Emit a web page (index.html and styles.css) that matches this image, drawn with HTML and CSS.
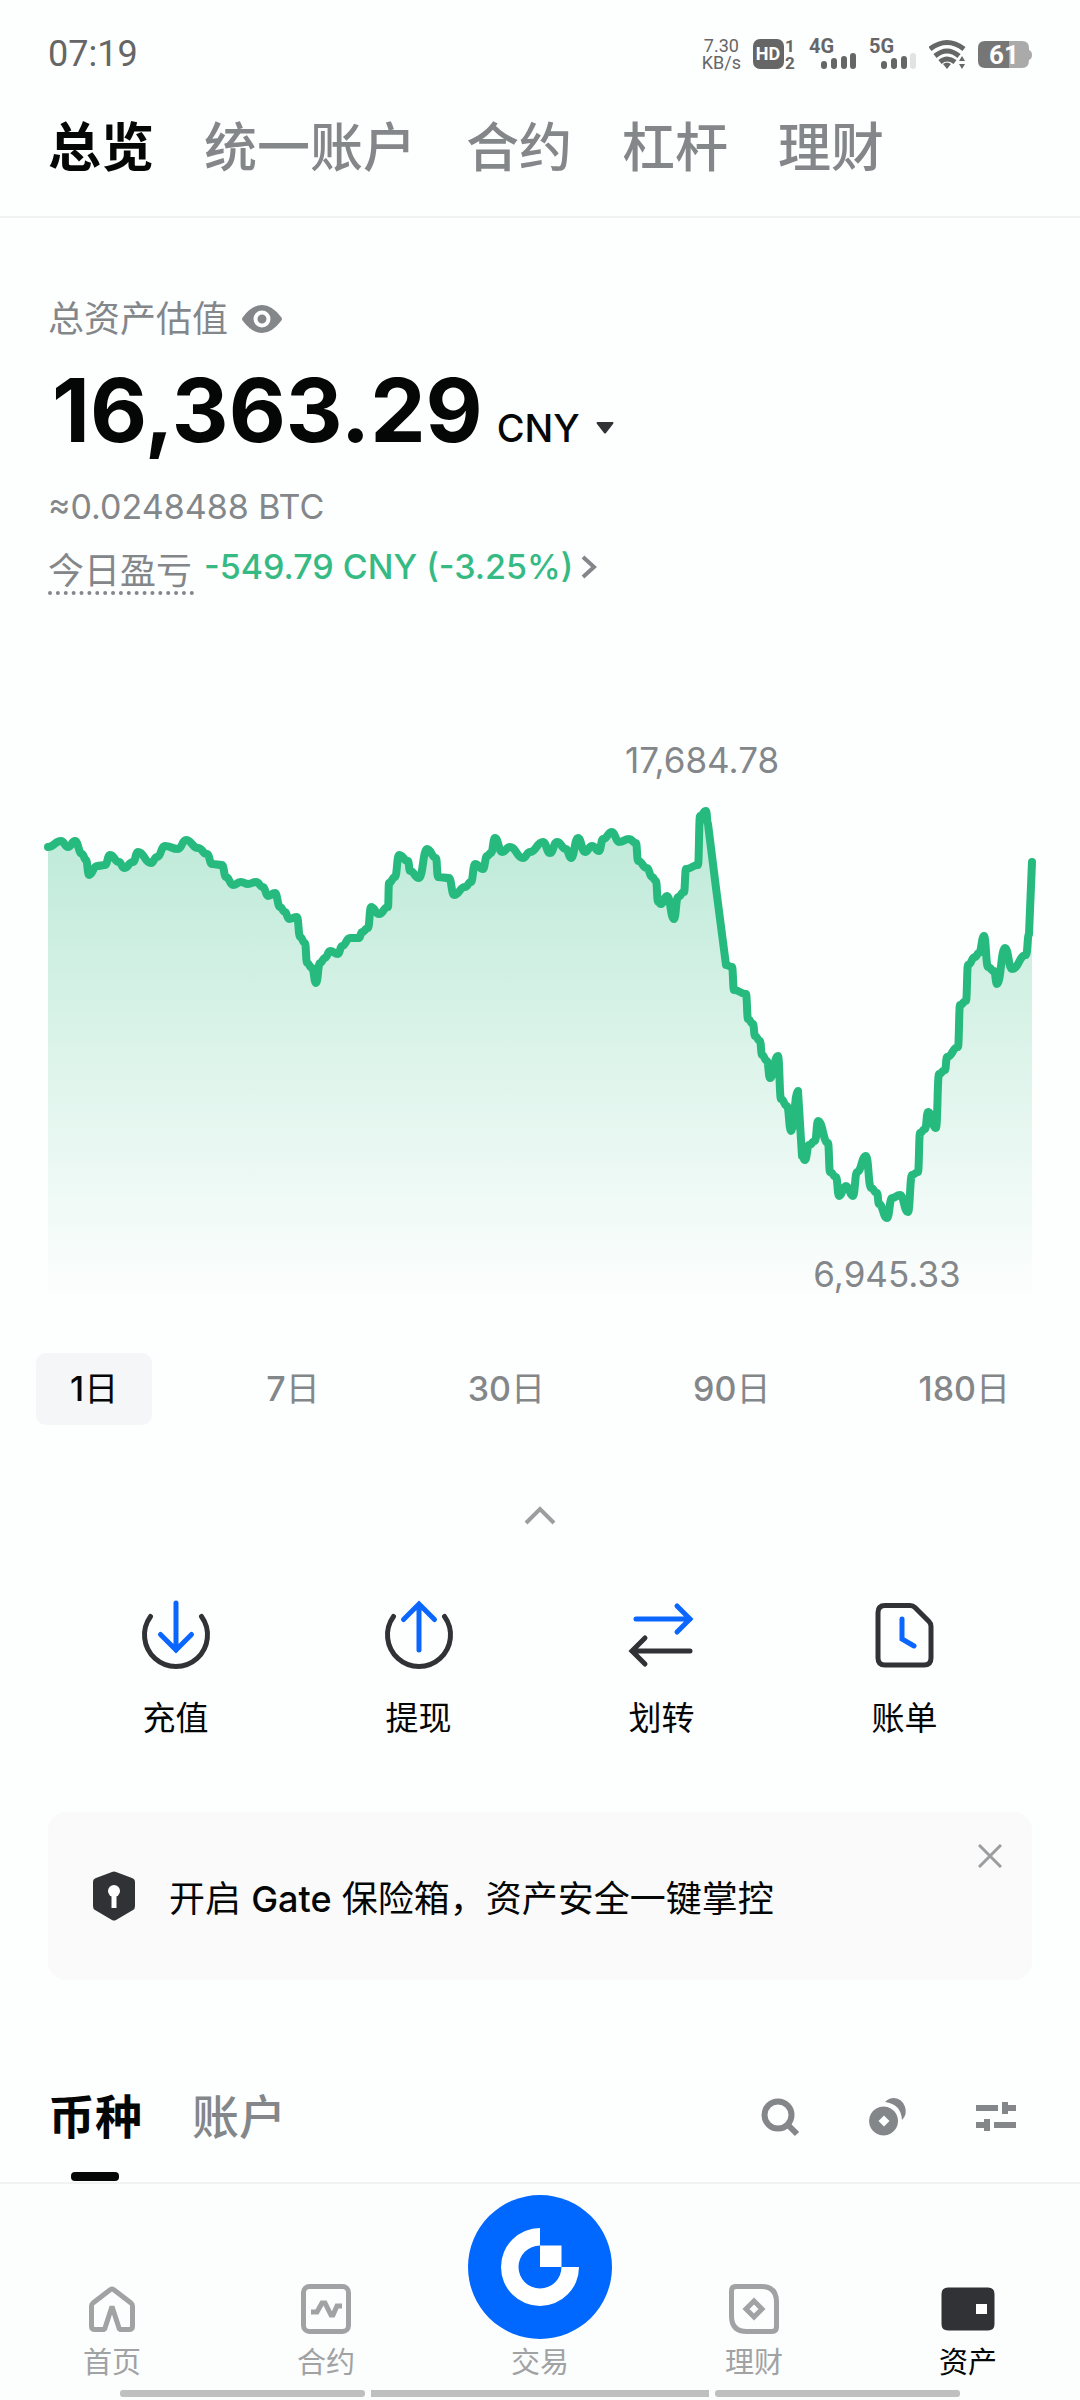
FILE: index.html
```
<!DOCTYPE html>
<html lang="zh-CN">
  <head>
    <meta charset="UTF-8" />
    <meta name="viewport" content="width=device-width, initial-scale=1.0" />
    <title>资产总览</title>
    <link rel="stylesheet" href="styles.css">
  </head>

  <body>
    <div class="status-bar">
      <span class="clock">07:19</span>
      <div class="status-icons">
        <span class="net-speed">7.30<br>KB/s</span>
        <svg width="44" height="40" viewBox="0 0 44 40">
          <rect x="0" y="5" width="31" height="30" rx="7" fill="#666"/>
          <text class="hd" x="15" y="26" text-anchor="middle">HD</text>
          <text class="sim" x="37" y="18" text-anchor="middle">1</text>
          <text class="sim" x="37" y="35" text-anchor="middle">2</text>
        </svg>
        <svg width="48" height="40" viewBox="0 0 48 40">
          <text class="gen" x="0" y="19">4G</text>
          <path class="bars" d="M15 30v2M25 27v5M35 25v7M44 22v10"/>
        </svg>
        <svg width="48" height="40" viewBox="0 0 48 40">
          <text class="gen" x="0" y="19">5G</text>
          <path class="bars" d="M15 30v2M25 27v5M35 25v7"/>
          <path class="bars off" d="M44 22v10"/>
        </svg>
        <svg width="37" height="32" viewBox="0 0 37 32" fill="none" stroke="#666" stroke-width="5">
          <path d="M1 11Q18 -2 35 11"/>
          <path d="M6 18Q18 8 30 18"/>
          <path d="M11 24Q18 18 26 24"/>
          <path d="M14 26Q18 23 22 26L18 31Z" fill="#666" stroke="none"/>
          <path d="M33 18l3 5h-6zM33 31l3-5h-6z" fill="#666" stroke="none"/>
        </svg>
        <svg width="54" height="32" viewBox="0 0 54 32">
          <path d="M31 3h13q7 0 7 7v2q3 1 3 5t-3 5q0 8-7 8H31z" fill="#aaa"/>
          <path d="M31 3v27H7q-7 0-7-7V10q0-7 7-7z" fill="#767676"/>
          <text class="battery" x="26" y="26" text-anchor="middle">61</text>
        </svg>
      </div>
    </div>

    <nav class="account-tabs">
      <a href="#" class="active">总览</a>
      <a href="#">统一账户</a>
      <a href="#">合约</a>
      <a href="#">杠杆</a>
      <a href="#">理财</a>
    </nav>

    <main>
      <section class="balance">
        <div class="balance-label">
          <span>总资产估值</span>
          <button class="plain" aria-label="隐藏金额">
            <svg width="40" height="28" viewBox="0 0 40 28">
              <path d="M1 12Q10 0 20 0T39 12Q41 14 39 16Q30 28 20 28T1 16Q-1 14 1 12Z" fill="#84878a"/>
              <circle cx="20" cy="14" r="6.500" fill="none" stroke="#fff" stroke-width="4"/>
            </svg>
          </button>
        </div>
        <div class="total">
          <span class="amount">16,363.29</span>
          <button class="plain currency">CNY
            <svg width="18" height="12" viewBox="0 0 18 12"><path d="M1 0h16q1 1 0 2L10 11q-1 1-2 0L1 2Q0 1 1 0z" fill="#303236"/></svg>
          </button>
        </div>
        <div class="btc">≈0.0248488 BTC</div>
        <div class="pnl">
          <span class="pnl-label">今日盈亏</span>
          <a href="#" class="pnl-value">-549.79 CNY (-3.25%)
            <svg width="16" height="24" viewBox="0 0 16 24"><path d="M2 2l11 10L2 22" fill="none" stroke="#84878a" stroke-width="4"/></svg>
          </a>
        </div>
      </section>

      <svg class="chart" viewBox="0 -60 984 570">
        <defs>
          <linearGradient id="fade" gradientUnits="userSpaceOnUse" x1="0" y1="20" x2="0" y2="500">
            <stop offset="0" stop-color="#27ba7e" stop-opacity="0.300"/>
            <stop offset="1" stop-color="#27ba7e" stop-opacity="0"/>
          </linearGradient>
        </defs>
        <path id="area" fill="url(#fade)"/>
        <path id="line" fill="none" stroke="#27ba7e" stroke-width="8" stroke-linecap="round" stroke-linejoin="round"/>
        <text x="654" y="-27" text-anchor="middle">17,684.78</text>
        <text x="839" y="487" text-anchor="middle">6,945.33</text>
      </svg>

      <div class="ranges">
        <button class="active"><b>1</b>日</button>
        <button><b>7</b>日</button>
        <button><b>30</b>日</button>
        <button><b>90</b>日</button>
        <button><b>180</b>日</button>
      </div>

      <button class="plain collapse" aria-label="收起">
        <svg width="34" height="22" viewBox="0 0 34 22"><path d="M3 18L17 4l14 14" fill="none" stroke="#9b9d9f" stroke-width="4"/></svg>
      </button>

      <div class="actions">
        <a href="#">
          <svg viewBox="0 0 72 72">
            <path d="M10.500 17.500a31.500 31.500 0 1 0 51 0"/>
            <path class="blue" d="M36 4v47M20.500 35.500L36 51l15.500-15.500"/>
          </svg>
          充值
        </a>
        <a href="#">
          <svg viewBox="0 0 72 72">
            <path d="M10.500 17.500a31.500 31.500 0 1 0 51 0"/>
            <path class="blue" d="M36 51V5M20.500 20.500L36 5l15.500 15.500"/>
          </svg>
          提现
        </a>
        <a href="#">
          <svg viewBox="0 0 72 72">
            <path class="blue" d="M10 20h54M51 7l13 13-13 13"/>
            <path d="M64 52H6M19 39L6 52l13 13"/>
          </svg>
          划转
        </a>
        <a href="#">
          <svg viewBox="0 0 72 72">
            <path d="M16 6.500h25q3 0 5 2l14 14q2 2 2 5V59q0 7-7 7H16q-7 0-7-7V13.500q0-7 7-7z"/>
            <path class="blue" d="M33 20v20l12 7"/>
          </svg>
          账单
        </a>
      </div>

      <div class="notice">
        <svg width="42" height="50" viewBox="0 0 42 50">
          <path d="M19 1q2-1 4 0l16 6q3 1 3 4v24q0 3-2 4L23 49q-2 1-4 0L2 39q-2-1-2-4V11q0-3 3-4z" fill="#303236"/>
          <circle cx="21" cy="20" r="6" fill="#fff"/>
          <path d="M21 20v17" stroke="#fff" stroke-width="5"/>
        </svg>
        <span>开启 <b>Gate</b> 保险箱，资产安全一键掌控</span>
        <button class="plain close" aria-label="关闭">
          <svg width="24" height="24" viewBox="0 0 24 24"><path d="M1 1l22 22M23 1L1 23" stroke="#9b9d9f" stroke-width="3"/></svg>
        </button>
      </div>

      <div class="list-head">
        <a href="#" class="active">币种</a>
        <a href="#">账户</a>
        <div class="tools">
          <button class="plain" aria-label="搜索">
            <svg width="40" height="40" viewBox="0 0 40 40" fill="none" stroke="#84878a" stroke-width="6">
              <circle cx="18" cy="18" r="13.500"/><path d="M28 28l9 9"/>
            </svg>
          </button>
          <button class="plain" aria-label="隐藏小额资产">
            <svg width="40" height="40" viewBox="0 0 40 40" fill="#84878a">
              <path d="M17 5A13 13 0 0 1 26 1A13 13 0 0 1 34 23Q33 7 17 5z"/>
              <path fill-rule="evenodd" d="M15.500 9.500a14.500 14.500 0 1 0 .1 0zM16 18.500l5.500 5.500-5.500 5.500-5.500-5.500z"/>
            </svg>
          </button>
          <button class="plain" aria-label="筛选">
            <svg width="40" height="40" viewBox="0 0 40 40" fill="#84878a">
              <path d="M0 8h22v6H0zM26 5h6v3h8v6h-8v3h-6zM18 25h22v6H18zM14 22v12H8v-3H0v-6h8v-3z"/>
            </svg>
          </button>
        </div>
      </div>
    </main>

    <nav class="bottom-nav">
      <a href="#">
        <svg viewBox="0 0 60 60"><path d="M22.500 50.500H13q-3.500 0-3.500-3.500V27q0-2 1.500-3L28.500 10.500q1.500-1 3 0L49 24q1.500 1 1.500 3v20q0 3.500-3.500 3.500h-9.500L30 27.500z" stroke-linejoin="bevel"/></svg>
        首页
      </a>
      <a href="#">
        <svg viewBox="0 0 60 60"><rect x="7.500" y="7.500" width="45" height="45" rx="6"/><path d="M15 33h6l5-9h3l6 12h2l4-9h5"/></svg>
        合约
      </a>
      <a href="#">
        <svg class="trade" viewBox="0 0 144 144">
          <circle cx="72" cy="72" r="72" fill="#0068ff"/>
          <path d="M72 33v17.500A21.500 21.500 0 1 0 93.500 72H111A39 39 0 1 1 72 33z" fill="#fff"/>
          <path d="M72 50.500h21.500V72H72z" fill="#fff"/>
        </svg>
        交易
      </a>
      <a href="#">
        <svg viewBox="0 0 60 60"><path d="M12 7.500h25q15.500 0 15.500 15.500v25q0 4.500-4.500 4.500H23Q7.500 52.500 7.500 37V12q0-4.500 4.500-4.500z"/><path d="M30 22l8 8-8 8-8-8z"/></svg>
        理财
      </a>
      <a href="#" class="active">
        <svg viewBox="0 0 60 60"><path d="M10 8.500h40q6.500 0 6.500 6.500v30q0 6.500-6.500 6.500H10q-6.500 0-6.500-6.500V15q0-6.500 6.500-6.500z" fill="#303236" stroke="none"/><path d="M38 25h11v10H38z" fill="#fff" stroke="none"/></svg>
        资产
      </a>
    </nav>
    <div class="gesture-bar"><span></span><span class="mid"></span><span></span></div>

    <script src="script.js"></script>
  </body>
</html>
```

FILE: styles.css
```
* {
  box-sizing: border-box;
}
body {
  margin: 0;
  background: #fdfefe;
  color: #050606;
  font-family: "Inter", "Noto Sans CJK SC", sans-serif;
  font-size: 36px;
}
a {
  color: inherit;
  text-decoration: none;
}
b {
  font-weight: 500;
}
svg {
  display: block;
  flex: none;
}
button {
  font: inherit;
  color: inherit;
  border: 0;
  background: none;
}
.plain {
  padding: 0;
}

/* status bar */
.status-bar {
  display: flex;
  justify-content: space-between;
  align-items: center;
  padding: 34px 48px 0;
  height: 74px;
  font-family: "Roboto", sans-serif;
  color: #666;
}
.status-icons {
  display: flex;
  align-items: center;
  gap: 12px;
}
.net-speed {
  font-size: 18px;
  line-height: 17px;
  text-align: center;
}
.status-icons text {
  font-weight: 700;
  fill: #666;
}
.status-icons .hd {
  font-size: 18px;
  fill: #fff;
}
.sim {
  font-size: 17px;
}
.gen {
  font-size: 20px;
}
.status-icons .battery {
  font-size: 26px;
  fill: #fff;
}
.bars {
  stroke: #666;
  stroke-width: 6;
  stroke-linecap: round;
}
.bars.off {
  stroke: #e2e2e2;
}

/* top tabs */
.account-tabs {
  display: flex;
  gap: 50px;
  padding: 42px 48px 36px;
  border-bottom: 2px solid #f1f2f2;
  font-size: 53px;
  line-height: 64px;
  font-weight: 500;
  color: #84878a;
}
.account-tabs .active {
  color: #050606;
  font-weight: 700;
}

main {
  padding: 79px 48px 0;
}

/* balance */
.balance-label {
  display: flex;
  align-items: center;
  gap: 14px;
  line-height: 44px;
  color: #84878a;
}
.total {
  display: flex;
  align-items: baseline;
  gap: 14px;
  margin-top: 19px;
  padding-left: 4px;
  line-height: 100px;
}
.amount {
  font-size: 88px;
  font-weight: 700;
}
.currency {
  display: flex;
  align-items: center;
  gap: 16px;
  font-size: 38px;
  font-weight: 500;
  line-height: 48px;
}
.btc {
  margin-top: 27px;
  font-size: 34px;
  line-height: 40px;
  color: #84878a;
}
.pnl {
  display: flex;
  align-items: flex-end;
  gap: 10px;
  height: 50px;
  margin-top: 18px;
}
.pnl-label {
  padding-right: 2px;
  line-height: 40px;
  color: #84878a;
  border-bottom: 4px dotted #84878a;
}
.pnl-value {
  display: flex;
  align-items: center;
  gap: 8px;
  align-self: flex-start;
  font-size: 34px;
  font-weight: 500;
  line-height: 44px;
  color: #35ba84;
}

/* chart */
.chart {
  width: 100%;
  height: auto;
  margin-top: 145px;
  overflow: visible;
}
.chart text {
  font-size: 35px;
  fill: #84878a;
}
.ranges {
  display: flex;
  justify-content: space-between;
  margin: 43px -12px 0;
}
.ranges button {
  padding: 0 34px;
  border-radius: 10px;
  font-size: 34px;
  line-height: 72px;
  color: #84878a;
}
.ranges .active {
  background: #f4f6f7;
  color: #050606;
}
.collapse {
  display: flex;
  align-items: center;
  height: 48px;
  margin: 67px auto 0;
}

/* actions */
.actions {
  display: grid;
  grid-template-columns: repeat(4, 1fr);
  margin: 59px 6px 0;
}
.actions a {
  display: flex;
  flex-direction: column;
  align-items: center;
  gap: 25px;
  font-size: 33px;
  line-height: 44px;
}
.actions svg {
  width: 72px;
  fill: none;
  stroke: #303236;
  stroke-width: 5;
  stroke-linecap: round;
}
.actions .blue {
  stroke: #0a66ff;
}

/* notice */
.notice {
  position: relative;
  display: flex;
  align-items: center;
  gap: 34px;
  min-height: 168px;
  margin-top: 72px;
  padding: 0 45px;
  border-radius: 18px;
  background: #fafafa;
}
.close {
  position: absolute;
  top: 32px;
  right: 30px;
}

/* list head */
.list-head {
  display: flex;
  align-items: center;
  gap: 50px;
  margin-top: 109px;
  padding-bottom: 37px;
  font-size: 47px;
  font-weight: 500;
  line-height: 56px;
  color: #84878a;
}
.list-head .active {
  position: relative;
  color: #050606;
  font-weight: 700;
}
.list-head .active::after {
  content: "";
  position: absolute;
  left: 50%;
  bottom: -36px;
  width: 48px;
  height: 9px;
  margin-left: -24px;
  border-radius: 4px;
  background: #050606;
}
.tools {
  display: flex;
  gap: 68px;
  margin-left: auto;
  padding-right: 16px;
}

/* bottom nav */
.bottom-nav {
  display: grid;
  grid-template-columns: repeat(5, 1fr);
  align-items: end;
  padding: 11px 5px 0;
  border-top: 2px solid #f1f2f2;
  background: #fcfdfd;
  font-size: 29px;
  line-height: 40px;
  color: #a0a2a4;
}
.bottom-nav a {
  display: flex;
  flex-direction: column;
  align-items: center;
  gap: 4px;
}
.bottom-nav svg {
  width: 60px;
  fill: none;
  stroke: #a0a2a4;
  stroke-width: 5;
}
.bottom-nav .trade {
  width: 144px;
  stroke: none;
}
.bottom-nav .active {
  color: #050606;
}
.gesture-bar {
  display: flex;
  gap: 6px;
  padding: 7px 120px 3px;
  background: #fcfdfd;
}
.gesture-bar span {
  flex: 245;
  height: 7px;
  border-radius: 3px;
  background: #bfbfbf;
}
.gesture-bar .mid {
  flex: 338;
  border-radius: 0;
}
```

FILE: script.js
```
// [x, y] in chart units
const points = [
  [0,47],[13,41],[20,47],[27,41],[34,54],[38,60],[41,75],[49,66],[57,65],[62,55],[71,62],[76,68],[85,62],
  [90,52],[103,63],[109,57],[117,46],[130,49],[138,40],[150,48],[159,54],[164,64],[174,65],[178,77],[185,85],
  [193,82],[200,84],[208,82],[215,87],[220,96],[227,93],[232,107],[237,112],[241,119],[249,117],[252,137],
  [257,143],[259,163],[264,168],[268,183],[272,163],[277,158],[282,151],[290,154],[294,146],[302,138],[311,138],
  [314,132],[320,128],[323,107],[331,114],[340,107],[341,83],[347,77],[351,55],[360,61],[362,71],[371,78],
  [379,49],[388,58],[390,77],[401,78],[406,95],[417,87],[423,82],[427,64],[435,69],[439,56],[443,53],[447,38],
  [454,52],[462,47],[475,58],[482,52],[495,42],[502,53],[509,42],[518,49],[523,58],[530,38],[537,52],[544,46],
  [551,51],[555,39],[564,32],[571,42],[581,39],[588,43],[590,61],[599,68],[604,77],[608,81],[610,102],[613,104],
  [619,96],[626,119],[630,97],[636,92],[638,69],[650,65],[652,16],[658,11],[660,24],[668,88],[678,165],[684,167],
  [686,190],[698,194],[700,219],[705,224],[707,236],[712,241],[714,255],[719,261],[722,278],[730,256],[733,299],
  [739,306],[743,331],[750,291],[754,356],[757,360],[761,345],[767,341],[770,321],[780,343],[782,372],[788,377],
  [791,396],[798,386],[805,396],[809,372],[818,356],[823,388],[829,393],[831,404],[839,418],[844,398],[852,395],
  [860,412],[864,375],[870,372],[872,333],[877,329],[880,312],[888,328],[891,274],[897,270],[899,257],[910,247],
  [912,205],[918,201],[920,165],[927,157],[931,153],[936,136],[940,167],[946,171],[949,184],[957,148],[964,169],
  [978,155],[981,134],[984,62]
];

let d = `M${points[0]}`;
for (let i = 1; i < points.length; i++) {
  const [x0, y0] = points[i - 1];
  const [x, y] = points[i];
  // steep runs stay straight, the rest is eased
  if (Math.abs(y - y0) > 60) {
    d += `L${x} ${y}`;
  } else {
    const mx = (x0 + x) / 2;
    d += `C${mx} ${y0} ${mx} ${y} ${x} ${y}`;
  }
}

document.getElementById("line").setAttribute("d", d);
document.getElementById("area").setAttribute("d", d + "V510H0Z");
```
